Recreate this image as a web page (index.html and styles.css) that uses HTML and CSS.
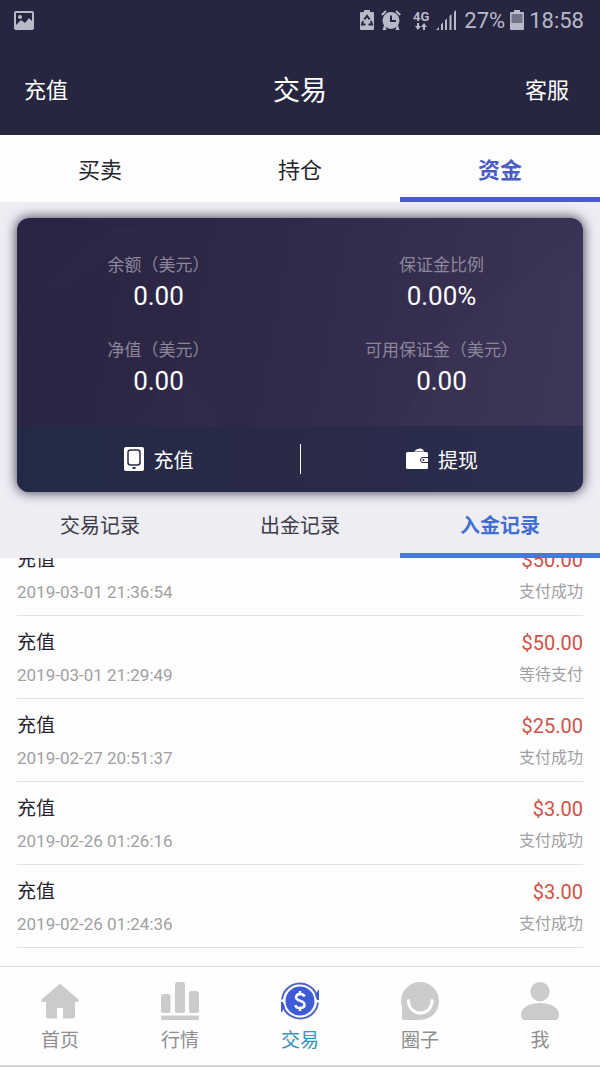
FILE: index.html
```html
<!DOCTYPE html>
<html lang="zh-CN">
<head>
<meta charset="utf-8">
<meta name="viewport" content="width=device-width, initial-scale=1">
<title>交易</title>
<link rel="stylesheet" href="styles.css">
</head>
<body class="app">
<header class="top">
  <div class="status">
    <svg class="status-photo" width="20" height="19" viewBox="0 0 20 19" aria-hidden="true"><path fill-rule="evenodd" d="M2 0h16a2 2 0 0 1 2 2v15a2 2 0 0 1-2 2H2a2 2 0 0 1-2-2V2a2 2 0 0 1 2-2zM2 2v12l5-5 4 3 4-5 3 3V2z"/><circle cx="6" cy="6" r="2"/></svg>
    <svg width="14" height="20" viewBox="0 0 14 20" aria-hidden="true"><path d="M4 0h6v2h3a1 1 0 0 1 1 1v16a1 1 0 0 1-1 1H1a1 1 0 0 1-1-1V3a1 1 0 0 1 1-1h3z"/><path class="cut" d="M4.300 9.500 7 6l2.700 3.500M11 11l1 3.500H8.500M5.500 14.500H2L3 11"/></svg>
    <svg class="status-alarm" width="20" height="20" viewBox="0 0 20 20" aria-hidden="true"><circle cx="10" cy="10.500" r="8.500"/><path d="M3.500 14 1.500 20h4zM16.500 14l2 6h-4z"/><path class="ink" d="M.8 5 5 1M19.200 5 15 1"/><path class="cut" d="M10 5.500V11h5"/></svg>
    <span class="network"><span>4G</span><svg width="12" height="7" viewBox="0 0 12 7" aria-hidden="true"><path d="M2 0h2v3h2L3 7 0 3h2zM8 7h2V4h2L9 0 6 4h2z"/></svg></span>
    <svg class="status-signal" width="21" height="20" viewBox="0 0 21 20" aria-hidden="true"><path d="M0 20l3-3v3zM5 14.500l2-2V20H5zM9 10.500l2-2V20H9zM13.500 6l2-2v16h-2zM18 2l2-2v20h-2z"/></svg>
    <span>27%</span>
    <svg width="14" height="20" viewBox="0 0 14 20" aria-hidden="true"><path d="M4 0h6v2h3a1 1 0 0 1 1 1v16a1 1 0 0 1-1 1H1a1 1 0 0 1-1-1V3a1 1 0 0 1 1-1h3z"/><path class="drained" d="M1.500 4h11v9h-11z"/></svg>
    <time>18:58</time>
  </div>
  <div class="titlebar">
    <button class="top-action" type="button">充值</button>
    <h1 class="title">交易</h1>
    <button class="top-action top-action-end" type="button">客服</button>
  </div>
</header>

<nav class="tabs">
  <button class="tab" type="button">买卖</button>
  <button class="tab" type="button">持仓</button>
  <button class="tab tab-active" type="button" aria-current="true">资金</button>
</nav>

<section class="account">
  <div class="card">
    <div class="balances">
      <svg class="facets" viewBox="0 0 566 208" preserveAspectRatio="none" aria-hidden="true">
        <path d="M30 65 95 10 130 8 40 75z"/>
        <path d="M115 208 165 145 205 208z"/>
        <path d="M380 208 440 110 540 30 566 60v148z"/>
      </svg>
      <dl class="figures">
        <div><dt>余额（美元）</dt><dd>0.00</dd></div>
        <div><dt>保证金比例</dt><dd>0.00%</dd></div>
        <div><dt>净值（美元）</dt><dd>0.00</dd></div>
        <div><dt>可用保证金（美元）</dt><dd>0.00</dd></div>
      </dl>
    </div>
    <div class="actions">
      <button class="action" type="button">
        <svg width="20" height="24" viewBox="0 0 20 24" aria-hidden="true"><rect width="20" height="24" rx="2" fill="#fff"/><rect x="4" y="3" width="12" height="15" rx="2.500" fill="none" stroke="#292948" stroke-width="1.500"/><ellipse cx="10" cy="21" rx="2" ry="1" fill="#292948"/></svg>
        充值
      </button>
      <button class="action" type="button">
        <svg width="22" height="24" viewBox="0 0 22 24" aria-hidden="true"><path fill="#fff" d="M8 4.500c2-2 4-3 6-3s3.500 1 4 3zM1.500 5h19A1.500 1.500 0 0 1 22 6.500v14a1.500 1.500 0 0 1-1.500 1.500h-19A1.500 1.500 0 0 1 0 20.500v-14A1.500 1.500 0 0 1 1.500 5z"/><path d="M22 10.500h-5a2.500 2.500 0 0 0 0 5h5" fill="none" stroke="#292948"/><circle cx="17.500" cy="13" r="1" fill="#292948"/></svg>
        提现
      </button>
    </div>
  </div>
  <nav class="tabs tabs-records">
    <button class="tab" type="button">交易记录</button>
    <button class="tab" type="button">出金记录</button>
    <button class="tab tab-active" type="button" aria-current="true">入金记录</button>
  </nav>
</section>

<main class="records">
  <ul class="record-list">
    <li class="record"><span class="kind">充值</span><span class="amount">$50.00</span><time class="when">2019-03-01 21:36:54</time><span class="state">支付成功</span></li>
    <li class="record"><span class="kind">充值</span><span class="amount">$50.00</span><time class="when">2019-03-01 21:29:49</time><span class="state">等待支付</span></li>
    <li class="record"><span class="kind">充值</span><span class="amount">$25.00</span><time class="when">2019-02-27 20:51:37</time><span class="state">支付成功</span></li>
    <li class="record"><span class="kind">充值</span><span class="amount">$3.00</span><time class="when">2019-02-26 01:26:16</time><span class="state">支付成功</span></li>
    <li class="record"><span class="kind">充值</span><span class="amount">$3.00</span><time class="when">2019-02-26 01:24:36</time><span class="state">支付成功</span></li>
  </ul>
</main>

<nav class="bottom">
  <a class="dest" href="#home">
    <svg width="38" height="38" viewBox="0 0 38 38" aria-hidden="true"><path d="M18 2.500q1-1 2 0L37.500 17.500q1 2-1 2.500H34v14.500q0 2-2 2H22V26h-6v10.500H7q-2 0-2-2V20H1.500q-2-.5-1-2.500z"/></svg>
    首页
  </a>
  <a class="dest" href="#market">
    <svg width="38" height="38" viewBox="0 0 38 38" aria-hidden="true"><rect y="12" width="9.500" height="19" rx="2.500"/><rect x="14" y="0" width="10" height="31" rx="2.500"/><rect x="28" y="9" width="10" height="22" rx="2.500"/><rect y="33.500" width="38" height="4.500" rx="1"/></svg>
    行情
  </a>
  <a class="dest dest-active" href="#trade" aria-current="page">
    <svg width="38" height="38" viewBox="0 0 38 38" aria-hidden="true"><circle cx="19" cy="19" r="14.500"/><path class="ring" d="M1 17.500A18 18 0 0 1 35.500 12.500M37 20.500A18 18 0 0 1 2.500 25.500"/><path d="M38 7v11h-2l-2-5zM0 31V20h2l2 5z"/><path class="dollar" d="M23.500 14.500Q22.500 12 19 12t-4 3.300c0 4.700 8.500 2.400 8.500 7.200Q23.500 26 19 26t-4.500-3M19 9v3.500M19 26v3"/></svg>
    交易
  </a>
  <a class="dest" href="#circle">
    <svg width="38" height="38" viewBox="0 0 38 38" aria-hidden="true"><path d="M19 0a19 19 0 1 1 0 38H3q-2 0-2-2V25A19 19 0 0 1 19 0z"/><path class="smile" d="M7.500 18.500c0 16.500 23.500 16.500 23.500 0"/></svg>
    圈子
  </a>
  <a class="dest" href="#me">
    <svg width="38" height="38" viewBox="0 0 38 38" aria-hidden="true"><circle cx="19" cy="9.700" r="9.700"/><path d="M0 33c0-7 7-12 19-12s19 5 19 12q0 5-4 5H4q-4 0-4-5z"/></svg>
    我
  </a>
</nav>
</body>
</html>
```
FILE: styles.css
```css
* {
  box-sizing: border-box;
}

.app {
  margin: 0;
  height: 100vh;
  display: flex;
  flex-direction: column;
  background: #fefefe;
  color: #24242e;
  font-family: Roboto, "Noto Sans CJK SC", sans-serif;
}

button {
  margin: 0;
  padding: 0;
  border: 0;
  background: none;
  color: inherit;
  font: inherit;
}

/* Header */
.top {
  flex: none;
  height: 135px;
  background: #262640;
  color: #fff;
}

.status {
  display: flex;
  align-items: center;
  gap: 5px;
  height: 40px;
  padding: 0 16px 0 14px;
  color: #b9b9c8;
  font-size: 22px;
}

.status svg {
  fill: #b9b9c8;
}

.status .cut,
.status .ink {
  fill: none;
  stroke: #262640;
  stroke-width: 2;
}

.status .ink {
  stroke: #b9b9c8;
}

.status .drained {
  fill: #737389;
}

.status-photo {
  margin-right: auto;
}

.status-alarm {
  margin: 0 7px 0 2px;
}

.status-signal {
  margin: 0 2px;
}

.network {
  display: flex;
  flex-direction: column;
  align-items: center;
  font-size: 13px;
  font-weight: 700;
  line-height: 12px;
}

.titlebar {
  display: grid;
  grid-template-columns: 1fr auto 1fr;
  align-items: center;
  height: 96px;
  padding: 0 31px 0 24px;
}

.title {
  margin: 0;
  padding-left: 7px;
  font-size: 27px;
  font-weight: 400;
}

.top-action {
  justify-self: start;
  font-size: 22px;
}

.top-action-end {
  justify-self: end;
}

/* Tabs */
.tabs {
  flex: none;
  display: grid;
  grid-template-columns: repeat(3, 1fr);
  height: 67px;
  background: #fefefe;
  font-size: 22px;
}

.tab {
  padding-top: 3px;
  border-bottom: 5px solid transparent;
}

.tab-active {
  border-color: #4a5dc6;
  color: #4a5dc6;
  font-weight: 700;
}

.tabs-records {
  height: 66px;
  background: none;
  color: #3c3c48;
  font-size: 20px;
}

.tabs-records .tab-active {
  border-color: #467bd5;
  color: #416fd0;
}

/* Account card */
.account {
  flex: none;
  padding-top: 16px;
  background: #eeedf4;
}

.card {
  margin: 0 17px;
  overflow: hidden;
  border-radius: 12px;
  background: linear-gradient(100deg, #292442, #302948 45%, #3c3557);
  box-shadow: 0 0 12px 1px #4c4a60;
  color: #fff;
}

.balances {
  position: relative;
}

.facets {
  position: absolute;
  inset: 0;
  width: 100%;
  height: 100%;
  fill: #fff;
  fill-opacity: 0.01;
}

.figures {
  position: relative;
  display: grid;
  grid-template-columns: 1fr 1fr;
  row-gap: 23px;
  margin: 0;
  padding: 33px 0 28px;
  text-align: center;
}

.figures dt {
  color: #8b869a;
  font-size: 17px;
  line-height: 28px;
}

.figures dd {
  margin: 0;
  font-size: 26px;
  line-height: 34px;
}

.actions {
  display: grid;
  grid-template-columns: 1fr 1fr;
  align-items: center;
  height: 66px;
  background: linear-gradient(90deg, #222b45, #292948 50%, #2b2e4e);
  font-size: 20px;
}

.action {
  display: flex;
  align-items: center;
  justify-content: center;
  gap: 10px;
  height: 30px;
}

.action + .action {
  border-left: 1px solid #fff;
}

.records {
  flex: 1;
  min-height: 0;
  display: flex;
  flex-direction: column;
  justify-content: flex-end;
  overflow: hidden;
  padding: 0 17px 18px;
}

.record-list {
  margin: 0;
  padding: 0;
  list-style: none;
}

.record {
  display: grid;
  grid-template-columns: 1fr auto;
  row-gap: 6px;
  padding: 13px 0 11px;
  border-bottom: 1px solid #e2e2e4;
}

.kind,
.amount {
  font-size: 19px;
  line-height: 28px;
}

.amount {
  color: #cf5248;
  font-size: 20px;
  text-align: right;
}

.when,
.state {
  color: #a0a0a2;
  font-size: 17px;
  line-height: 24px;
}

.state {
  font-size: 16px;
  text-align: right;
}

/* Bottom navigation */
.bottom {
  flex: none;
  display: grid;
  grid-template-columns: repeat(5, 1fr);
  height: 101px;
  padding-top: 15px;
  border-top: 1px solid #d9d9db;
  border-bottom: 2px solid #d4d4d4;
}

.dest {
  display: flex;
  flex-direction: column;
  align-items: center;
  gap: 7px;
  color: #8e8e8e;
  font-size: 19px;
  line-height: 28px;
  text-decoration: none;
}

.dest svg {
  fill: #cbcbcb;
}

.dest-active {
  color: #3592bd;
}

.dest-active svg {
  fill: #3f5bd8;
}

.ring,
.dollar,
.smile {
  fill: none;
  stroke-width: 2;
}

.ring {
  stroke: #5266c0;
}

.dollar {
  stroke: #fff;
  stroke-width: 2.5;
}

.smile {
  stroke: #fff;
  stroke-width: 3;
  stroke-linecap: round;
}
```
